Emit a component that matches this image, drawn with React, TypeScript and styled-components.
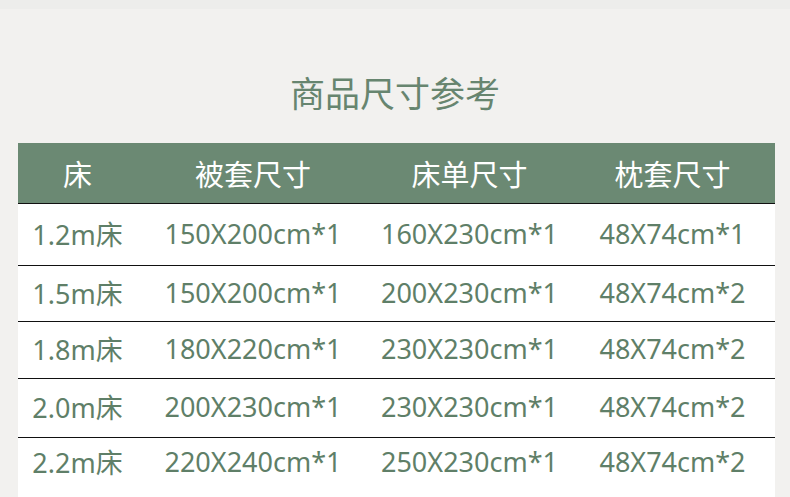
import * as React from "react";
import styled, { createGlobalStyle } from "styled-components";

const GlobalStyle = createGlobalStyle`
  html, body {
    margin: 0;
    padding: 0;
    background: #f2f1ef;
  }
`;

// styles
const PageStyle = styled.main`
  width: 790px;
  height: 497px;
  overflow: hidden;
  background: #f2f1ef;
  font-family: "Noto Sans", "Noto Sans CJK SC", sans-serif;
`;

const TopBand = styled.div`
  height: 9px;
  background: #ededeb;
`;

const TitleStyle = styled.h1`
  margin: 0;
  padding: 63px 0 31px;
  height: 40px;
  line-height: 40px;
  text-align: center;
  font-size: 35px;
  font-weight: 400;
  color: #67856f;
  font-family: "Noto Sans CJK SC", sans-serif;
`;

const TableStyle = styled.section`
  margin-left: 18px;
  width: 757px;
  padding-bottom: 30px;
  background: #ffffff;
`;

const Row = styled.div<{ $h: number; $head?: boolean; $last?: boolean }>`
  display: grid;
  grid-template-columns: 119px 232px 201px 205px;
  align-items: center;
  height: ${(p) => p.$h}px;
  background: ${(p) => (p.$head ? "#6b8973" : "#ffffff")};
  border-bottom: ${(p) => (p.$last ? "none" : "1px solid #111")};
`;

const Cell = styled.div<{ $head?: boolean }>`
  text-align: center;
  white-space: nowrap;
  padding-bottom: ${(p) => (p.$head ? "0" : "3px")};
  font-size: ${(p) => (p.$head ? "29px" : "27px")};
  color: ${(p) => (p.$head ? "#ffffff" : "#5f7f68")};
  font-family: ${(p) =>
    p.$head ? `"Noto Sans CJK SC", sans-serif` : `"Noto Sans", "Noto Sans CJK SC", sans-serif`};
`;

const head = ["床", "被套尺寸", "床单尺寸", "枕套尺寸"];

const rows = [
  { h: 61, cells: ["1.2m床", "150X200cm*1", "160X230cm*1", "48X74cm*1"] },
  { h: 55, cells: ["1.5m床", "150X200cm*1", "200X230cm*1", "48X74cm*2"] },
  { h: 56, cells: ["1.8m床", "180X220cm*1", "230X230cm*1", "48X74cm*2"] },
  { h: 58, cells: ["2.0m床", "200X230cm*1", "230X230cm*1", "48X74cm*2"] },
  { h: 50, cells: ["2.2m床", "220X240cm*1", "250X230cm*1", "48X74cm*2"] },
];

// markup
const App = () => {
  return (
    <>
      <GlobalStyle />
      <PageStyle>
        <TopBand />
        <TitleStyle>商品尺寸参考</TitleStyle>
        <TableStyle>
          <Row $h={60} $head>
            {head.map((t) => (
              <Cell key={t} $head>
                {t}
              </Cell>
            ))}
          </Row>
          {rows.map((r, i) => (
            <Row key={r.cells[0]} $h={r.h} $last={i === rows.length - 1}>
              {r.cells.map((c, j) => (
                <Cell key={j}>{c}</Cell>
              ))}
            </Row>
          ))}
        </TableStyle>
      </PageStyle>
    </>
  );
};

export default App;
